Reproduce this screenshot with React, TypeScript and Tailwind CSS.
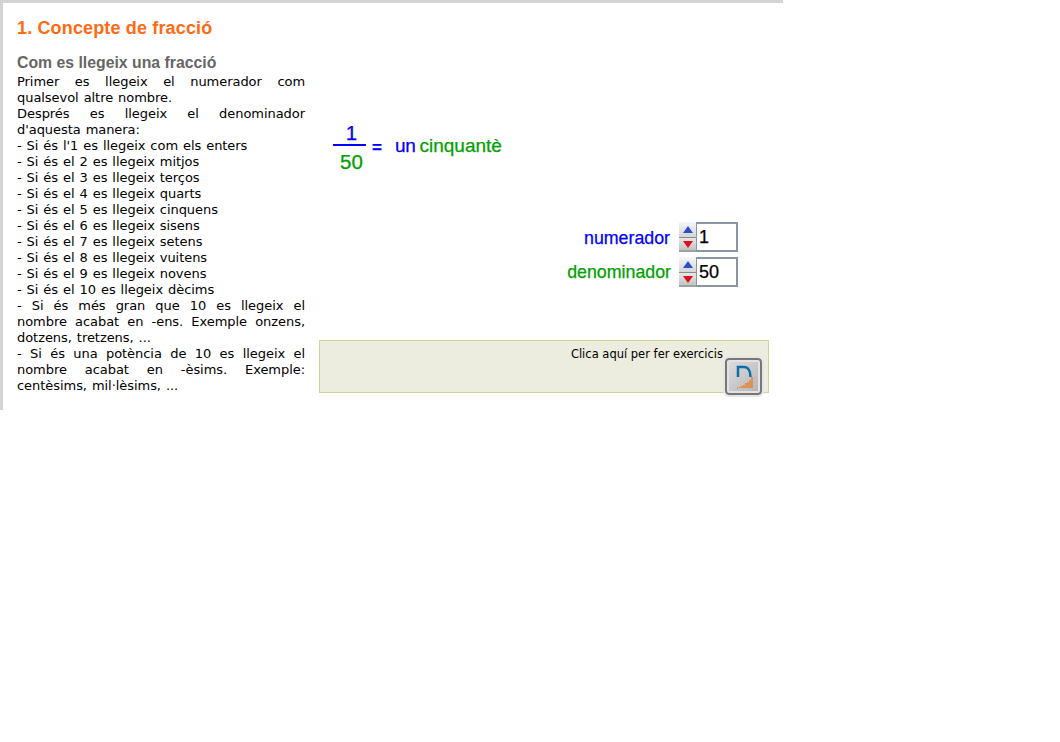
import React from 'react';

const rules = [
  { text: "Primer es llegeix el numerador com qualsevol altre nombre.", justify: true },
  { text: "Després es llegeix el denominador d'aquesta manera:", justify: true },
  { text: "- Si és l'1 es llegeix com els enters" },
  { text: "- Si és el 2 es llegeix mitjos" },
  { text: "- Si és el 3 es llegeix terços" },
  { text: "- Si és el 4 es llegeix quarts" },
  { text: "- Si és el 5 es llegeix cinquens" },
  { text: "- Si és el 6 es llegeix sisens" },
  { text: "- Si és el 7 es llegeix setens" },
  { text: "- Si és el 8 es llegeix vuitens" },
  { text: "- Si és el 9 es llegeix novens" },
  { text: "- Si és el 10 es llegeix dècims" },
  { text: "- Si és més gran que 10 es llegeix el nombre acabat en -ens. Exemple onzens, dotzens, tretzens, ...", justify: true },
  { text: "- Si és una potència de 10 es llegeix el nombre acabat en -èsims. Exemple: centèsims, mil·lèsims, ...", justify: true },
];

const Spinner = ({ value }: { value: string }) => (
  <div className="flex h-[30px] items-stretch">
    <div className="flex w-[17px] flex-col border-b-2 border-[#a0a0a0]">
      <button className="flex h-[16px] items-center justify-center border-b border-[#8c8c8c] bg-gradient-to-b from-[#f4f6fa] to-[#d4d6da]">
        <svg width="10" height="7" viewBox="0 0 10 7"><path d="M5 0 L10 7 L0 7 Z" fill="#2b4fc8" /></svg>
      </button>
      <button className="flex flex-1 items-center justify-center bg-gradient-to-b from-[#e8e8e8] to-[#c4c4c4]">
        <svg width="10" height="7" viewBox="0 0 10 7"><path d="M0 0 L10 0 L5 7 Z" fill="#d81020" /></svg>
      </button>
    </div>
    <div className="w-[42px] border-t-2 border-r-2 border-b-2 border-l border-[#8a96a3] bg-white pl-[2px] text-[18px] leading-[26px] text-black [-webkit-text-stroke:0.25px] font-['Liberation_Sans',sans-serif]">
      {value}
    </div>
  </div>
);

export default function App() {
  return (
    <div className="min-h-[742px] bg-white">
      <div className="flex h-[410px] w-[783px] border-l-[3px] border-t-[3px] border-[#d4d4d4] font-['DejaVu_Sans',sans-serif] text-black">
        <div className="w-[302px] shrink-0 pl-[14px]">
          <h1 className="mt-[14px] text-[18px] leading-[22px] tracking-[0.15px] font-bold text-[#ff6a13] font-['Liberation_Sans',sans-serif]">1. Concepte de fracció</h1>
          <h2 className="mt-[14px] text-[15.8px] leading-[20px] font-bold text-[#666666] font-['Liberation_Sans',sans-serif]">Com es llegeix una fracció</h2>
          <div className="mt-[1px] text-[13px] leading-[16px] tracking-[-0.05px] [word-spacing:0.9px]">
            {rules.map((r, i) => (
              <p key={i} className={r.justify ? 'text-justify' : ''}>{r.text}</p>
            ))}
          </div>
        </div>

        <div className="flex w-[464px] shrink-0 flex-col pl-[14px] font-['Liberation_Sans',sans-serif]">
          <div className="mt-[118px] ml-[14px] flex items-center [-webkit-text-stroke:0.25px]">
            <div className="flex w-[33px] flex-col items-center text-[20.5px]">
              <span className="pl-[4px] leading-[23px] text-[#0000ff]">1</span>
              <span className="h-[2px] w-full bg-[#0000ff]" />
              <span className="pl-[4px] pt-[4px] leading-[24px] text-[#00a000]">50</span>
            </div>
            <span className="ml-[6px] text-[17px] font-bold text-[#0000ff]">=</span>
            <span className="ml-[13px] mb-[2px] text-[19px] tracking-[-0.3px] text-[#0000ff]">un</span>
            <span className="ml-[4px] mb-[2px] text-[19px] text-[#00a000]">cinquantè</span>
          </div>

          <div className="mt-[48px] flex flex-col items-end gap-[5px] pr-[31px] [-webkit-text-stroke:0.25px]">
            <div className="flex items-center gap-[9px]">
              <span className="pt-[2px] text-[17.8px] text-[#0000ff]">numerador</span>
              <Spinner value="1" />
            </div>
            <div className="flex items-center gap-[8px]">
              <span className="text-[17.8px] text-[#00a000]">denominador</span>
              <Spinner value="50" />
            </div>
          </div>

          <div className="relative mt-[53px] h-[53px] border border-[#cdd39b] bg-[#ecedde]">
            <p className="pr-[45px] pt-[6px] text-right text-[11.5px] leading-[14px] font-['DejaVu_Sans',sans-serif]">Clica aquí per fer exercicis</p>
            <button className="absolute left-[405px] top-[17px] flex h-[37px] w-[37px] items-center justify-center rounded-[4px] border-2 border-[#777777] bg-gradient-to-br from-[#dedede] to-[#b4b4b4] shadow-[inset_0_0_0_2px_#e2e2e2] outline-2 outline-[#e6e6e6]">
              <svg width="26" height="26" viewBox="0 0 26 26">
                <path d="M7 13 V3 H13 C17 3 19.5 7 19.5 13" fill="none" stroke="#0b6ea8" strokeWidth="2.5" />
                <path d="M6 24 h1 M9 24 v-1 M11 24 v-2 M13 24 v-3 M15 24 v-5 M17 24 v-6 M19 24 v-8 M21 24 v-11" stroke="#f26a00" strokeWidth="1.1" fill="none" />
              </svg>
            </button>
          </div>
        </div>
      </div>
    </div>
  );
}
